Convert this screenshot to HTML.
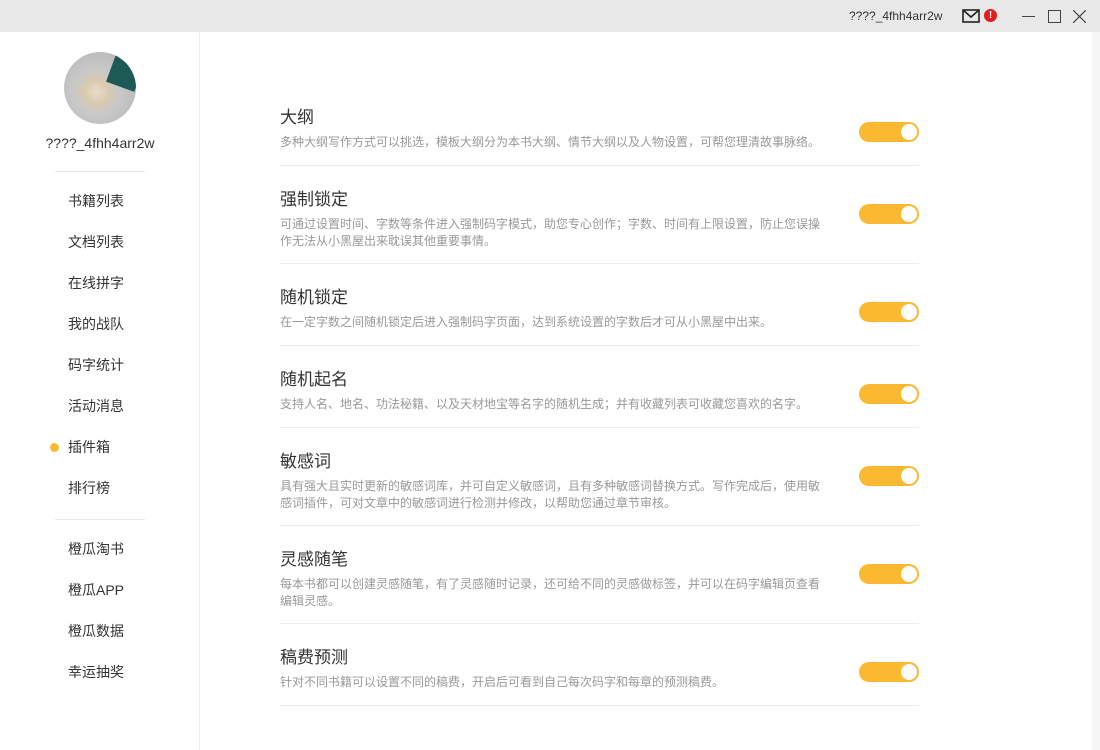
<!DOCTYPE html>
<html><head><meta charset="utf-8"><style>
*{margin:0;padding:0;box-sizing:border-box}
body{width:1100px;height:750px;background:#fff;font-family:"Liberation Sans","Noto Sans CJK SC",sans-serif;position:relative;overflow:hidden}
.top{position:absolute;left:0;top:0;width:1100px;height:32px;background:#e8e8e8}
.side{position:absolute;left:0;top:32px;width:200px;height:718px;border-right:1px solid #ececec}
.nav{position:absolute;left:68px;font-size:14px;color:#333;transform:translateY(-50%)}
.hr{position:absolute;left:55px;width:90px;height:1px;background:#eaeaea}
.sec{position:absolute;left:280px;width:639px;border-bottom:1px solid #ececec}
.t{position:absolute;left:0;font-size:17px;color:#333}
.d{position:absolute;left:0;width:545px;font-size:12px;line-height:17px;color:#999}
.tg{position:absolute;left:579px;width:60px;height:20px;border-radius:10px;background:#fbb931}
.tg:after{content:"";position:absolute;right:2px;top:2px;width:16px;height:16px;border-radius:50%;background:#fff}
</style></head><body>
<div class="top">
<span style="position:absolute;left:849px;top:9px;font-size:12px;color:#333">????_4fhh4arr2w</span>
<svg style="position:absolute;left:962px;top:9px" width="18" height="14" viewBox="0 0 18 14"><rect x="1" y="1" width="16" height="12" fill="none" stroke="#222" stroke-width="1.6"/><path d="M1 1l8 7 8-7" fill="none" stroke="#222" stroke-width="1.6"/></svg>
<div style="position:absolute;left:984px;top:9px;width:13px;height:13px;border-radius:50%;background:#e02020;color:#fff;font-size:10px;font-weight:bold;text-align:center;line-height:13px">!</div>
<div style="position:absolute;left:1022px;top:16px;width:13px;height:1px;background:#444"></div>
<div style="position:absolute;left:1048px;top:10px;width:13px;height:13px;border:1px solid #444"></div>
<svg style="position:absolute;left:1073px;top:10px" width="13" height="13"><path d="M0 0L13 13M13 0L0 13" stroke="#444" stroke-width="1.2"/></svg>
</div>
<div style="position:absolute;left:1092px;top:32px;width:8px;height:718px;background:#f7f7f7"></div>
<div class="side">
<div style="position:absolute;left:64px;top:20px;width:72px;height:72px;border-radius:50%;background:radial-gradient(circle at 45% 55%,#e9dcc8 0,#d8c9b0 22%,#c9c9c9 40%,#bdbdbd 70%);overflow:hidden"><div style="position:absolute;right:-6px;top:-4px;width:30px;height:40px;background:#1d5a55;transform:rotate(20deg)"></div></div>
<div style="position:absolute;left:0;width:200px;top:103px;text-align:center;font-size:14px;color:#333">????_4fhh4arr2w</div>
<div class="hr" style="top:139px"></div>
<div class="nav" style="top:169px">书籍列表</div>
<div class="nav" style="top:210px">文档列表</div>
<div class="nav" style="top:251px">在线拼字</div>
<div class="nav" style="top:292px">我的战队</div>
<div class="nav" style="top:333px">码字统计</div>
<div class="nav" style="top:374px">活动消息</div>
<div style="position:absolute;left:50px;top:411px;width:9px;height:9px;border-radius:50%;background:#fbb931"></div>
<div class="nav" style="top:415px">插件箱</div>
<div class="nav" style="top:456px">排行榜</div>
<div class="hr" style="top:487px"></div>
<div class="nav" style="top:517px">橙瓜淘书</div>
<div class="nav" style="top:558px">橙瓜APP</div>
<div class="nav" style="top:599px">橙瓜数据</div>
<div class="nav" style="top:640px">幸运抽奖</div>
</div>

<div class="sec" style="top:100px;height:66px"><div class="t" style="top:3px">大纲</div><div class="d" style="top:34px">多种大纲写作方式可以挑选，模板大纲分为本书大纲、情节大纲以及人物设置，可帮您理清故事脉络。</div><div class="tg" style="top:22px"></div></div>
<div class="sec" style="top:166px;height:98px"><div class="t" style="top:19px">强制锁定</div><div class="d" style="top:50px">可通过设置时间、字数等条件进入强制码字模式，助您专心创作；字数、时间有上限设置，防止您误操作无法从小黑屋出来耽误其他重要事情。</div><div class="tg" style="top:38px"></div></div>
<div class="sec" style="top:264px;height:82px"><div class="t" style="top:19px">随机锁定</div><div class="d" style="top:50px">在一定字数之间随机锁定后进入强制码字页面，达到系统设置的字数后才可从小黑屋中出来。</div><div class="tg" style="top:38px"></div></div>
<div class="sec" style="top:346px;height:82px"><div class="t" style="top:19px">随机起名</div><div class="d" style="top:50px">支持人名、地名、功法秘籍、以及天材地宝等名字的随机生成；并有收藏列表可收藏您喜欢的名字。</div><div class="tg" style="top:38px"></div></div>
<div class="sec" style="top:428px;height:98px"><div class="t" style="top:19px">敏感词</div><div class="d" style="top:50px">具有强大且实时更新的敏感词库，并可自定义敏感词，且有多种敏感词替换方式。写作完成后，使用敏感词插件，可对文章中的敏感词进行检测并修改，以帮助您通过章节审核。</div><div class="tg" style="top:38px"></div></div>
<div class="sec" style="top:526px;height:98px"><div class="t" style="top:19px">灵感随笔</div><div class="d" style="top:50px">每本书都可以创建灵感随笔，有了灵感随时记录，还可给不同的灵感做标签，并可以在码字编辑页查看编辑灵感。</div><div class="tg" style="top:38px"></div></div>
<div class="sec" style="top:624px;height:82px"><div class="t" style="top:19px">稿费预测</div><div class="d" style="top:50px">针对不同书籍可以设置不同的稿费，开启后可看到自己每次码字和每章的预测稿费。</div><div class="tg" style="top:38px"></div></div>
</body></html>
